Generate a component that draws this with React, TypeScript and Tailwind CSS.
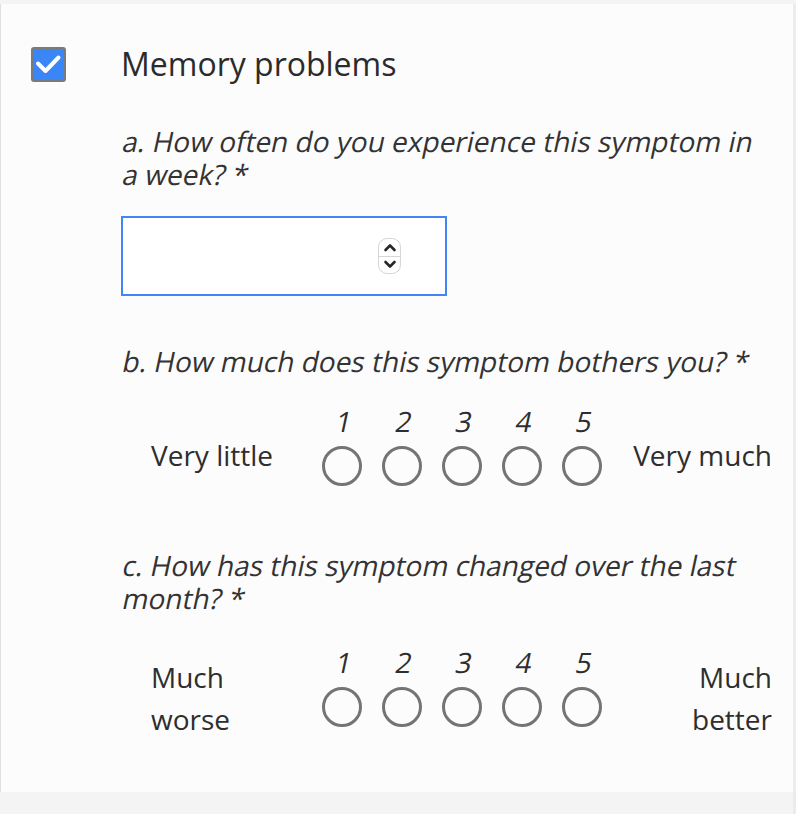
import React from "react";

function Checkbox() {
  return (
    <div className="w-[35px] h-[35px] shrink-0 rounded-[3px] border-2 border-[#7a7a7a] bg-[#3b86f6] flex items-center justify-center">
      <svg width="31" height="31" viewBox="0 0 31 31">
        <polyline
          points="5,14.5 12.5,22 25.5,8.5"
          fill="none"
          stroke="#ffffff"
          strokeWidth="4"
          strokeLinecap="round"
          strokeLinejoin="round"
        />
      </svg>
    </div>
  );
}

function Spinner() {
  return (
    <div className="w-[23px] h-[36px] rounded-[9px] border border-[#d6d6d6] bg-white flex flex-col overflow-hidden">
      <div className="flex-1 flex items-center justify-center border-b border-[#d6d6d6]">
        <svg width="14" height="9" viewBox="0 0 14 9">
          <polyline points="2.5,7 7,2.5 11.5,7" fill="none" stroke="#262626" strokeWidth="2.6" strokeLinecap="round" strokeLinejoin="round" />
        </svg>
      </div>
      <div className="flex-1 flex items-center justify-center">
        <svg width="14" height="9" viewBox="0 0 14 9">
          <polyline points="2.5,2 7,6.5 11.5,2" fill="none" stroke="#262626" strokeWidth="2.6" strokeLinecap="round" strokeLinejoin="round" />
        </svg>
      </div>
    </div>
  );
}

function QLine({ children }: { children: React.ReactNode }) {
  return (
    <div className="h-[33px] text-[28px] leading-[33px] whitespace-nowrap text-[#333333]">
      <span className="inline-block -skew-x-12 origin-[0_27px]">{children}</span>
    </div>
  );
}

function Rating({
  left,
  right,
  mt,
  labelPad,
}: {
  left: React.ReactNode;
  right: React.ReactNode;
  mt: string;
  labelPad: string;
}) {
  const nums = [1, 2, 3, 4, 5];
  return (
    <div className={`ml-[30px] grid grid-cols-[161px_300px_160px] items-center ${mt}`}>
      <div className={`text-[28px] leading-[42px] text-[#2e2e2e] ${labelPad}`}>{left}</div>
      <div className="flex pb-[18px]">
        {nums.map((n) => (
          <div key={n} className="w-[60px] flex flex-col items-center">
            <div className="h-[30px] text-[28px] leading-[30px] text-[#2e2e2e]">
              <span className="inline-block -skew-x-12 origin-[0_26px]">{n}</span>
            </div>
            <div className="mt-[10px] w-[40px] h-[40px] rounded-full border-[3.5px] border-[#747474]" />
          </div>
        ))}
      </div>
      <div className={`text-[28px] leading-[42px] text-right text-[#2e2e2e] ${labelPad}`}>{right}</div>
    </div>
  );
}

export default function App() {
  return (
    <div className="min-h-screen bg-[#f4f4f4] pt-[4px] flex font-['Open_Sans',sans-serif]">
      <div className="w-[793px] h-[788px] shrink-0 bg-[#fcfcfc] border-l border-[#e0e0e0] pl-[30px] pt-[40px]">
        <div className="flex items-center h-[40px]">
          <Checkbox />
          <div className="ml-[55px] text-[32px] leading-[40px] text-[#2b2b2b]">Memory problems</div>
        </div>
        <div className="ml-[90px]">
          <div className="mt-[41px]">
            <QLine>a. How often do you experience this symptom in</QLine>
            <QLine>a week? *</QLine>
          </div>
          <div className="mt-[25px] w-[326px] h-[80px] border-2 border-[#4186f4] bg-white flex items-center justify-end pr-[44px]">
            <Spinner />
          </div>
          <div className="mt-[49px]">
            <QLine>b. How much does this symptom bothers you? *</QLine>
          </div>
          <Rating mt="mt-[28px]" labelPad="pt-0" left="Very little" right="Very much" />
          <div className="mt-[45px]">
            <QLine>c. How has this symptom changed over the last</QLine>
            <QLine>month? *</QLine>
          </div>
          <Rating
            mt="mt-[32px]"
            labelPad="pt-[4px]"
            left={
              <>
                Much
                <br />
                worse
              </>
            }
            right={
              <>
                Much
                <br />
                better
              </>
            }
          />
        </div>
      </div>
      <div className="w-[3px] bg-[#ececec]" />
    </div>
  );
}
